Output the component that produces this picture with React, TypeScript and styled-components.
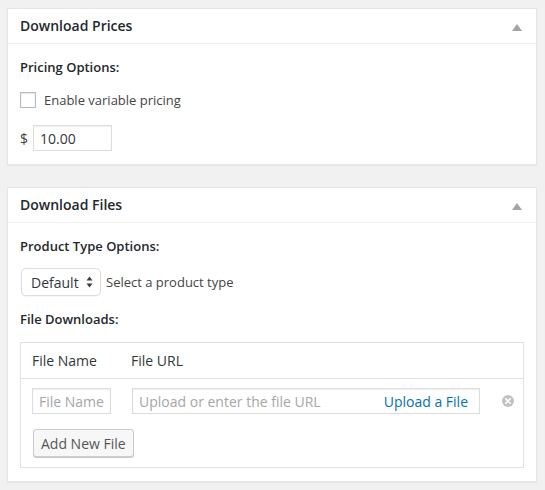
import React from "react";
import styled, { createGlobalStyle } from "styled-components";

const Global = createGlobalStyle`
  html, body { margin: 0; padding: 0; background: #f1f1f1; }
  body {
    font-family: "Open Sans", "Liberation Sans", sans-serif;
    font-size: 13px;
    color: #444;
    -webkit-font-smoothing: antialiased;
  }
  * { box-sizing: border-box; }
`;

const Page = styled.div`
  display: flex;
  flex-direction: column;
  gap: 22px;
  padding: 8px 0 10px 7px;
`;

const Panel = styled.section`
  width: 530px;
  background: #fff;
  border: 1px solid #e5e5e5;
  box-shadow: 0 1px 1px rgba(0, 0, 0, 0.04);
`;

const PanelHeader = styled.header`
  display: flex;
  align-items: center;
  justify-content: space-between;
  height: 35px;
  padding: 0 14px 0 12px;
  border-bottom: 1px solid #eee;
`;

const PanelTitle = styled.h2`
  margin: 0;
  font-size: 14px;
  font-weight: 600;
  line-height: 1.4;
  color: #23282d;
`;

const Toggle = styled.span`
  width: 0;
  height: 0;
  border-left: 5px solid transparent;
  border-right: 5px solid transparent;
  border-bottom: 7px solid #a0a5aa;
  margin-top: 2px;
`;

const PanelBody = styled.div`
  display: flex;
  flex-direction: column;
  align-items: flex-start;
  gap: 14px;
  padding: 13px 12px 13px;
`;

const SectionLabel = styled.div<{ $top?: number }>`
  font-weight: 600;
  line-height: 18px;
  color: #23282d;
  margin-top: ${(p) => p.$top ?? 0}px;
`;

const CheckRow = styled.label`
  display: flex;
  align-items: center;
  gap: 8px;
  line-height: 18px;
  margin-top: 1px;
  color: #444;
`;

const CheckBox = styled.span`
  width: 16px;
  height: 16px;
  border: 1px solid #b4b9be;
  background: #fff;
  box-shadow: inset 0 1px 2px rgba(0, 0, 0, 0.1);
`;

const PriceRow = styled.div`
  display: flex;
  align-items: center;
  gap: 5px;
  margin-top: 2px;
  color: #444;
  font-size: 14px;
`;

const TextInput = styled.div<{ $w: number; $placeholder?: boolean }>`
  display: flex;
  align-items: center;
  justify-content: space-between;
  width: ${(p) => p.$w}px;
  height: 26px;
  padding: 0 7px 0 6px;
  border: 1px solid #ddd;
  background: #fff;
  box-shadow: inset 0 1px 2px rgba(0, 0, 0, 0.07);
  font-size: 14px;
  color: ${(p) => (p.$placeholder ? "#a6a6a6" : "#32373c")};
  white-space: nowrap;
  overflow: hidden;
`;

const TypeRow = styled.div`
  display: flex;
  align-items: center;
  gap: 5px;
  margin: -1px 0 0 1px;
`;

const Select = styled.div`
  display: flex;
  align-items: center;
  justify-content: space-between;
  width: 80px;
  height: 28px;
  padding: 0 7px 0 9px;
  border: 1px solid #ddd;
  border-radius: 5px;
  background: #fff;
  box-shadow: 0 1px 1px rgba(0, 0, 0, 0.04);
  font-size: 14px;
  color: #32373c;
`;

const Hint = styled.span`
  color: #444;
`;

const FileTable = styled.div`
  width: 504px;
  border: 1px solid #e1e1e1;
`;

const TableHead = styled.div`
  display: flex;
  align-items: center;
  height: 36px;
  padding: 0 11px;
  border-bottom: 1px solid #e1e1e1;
  font-size: 14px;
  color: #32373c;
`;

const HeadCell = styled.span<{ $w?: number }>`
  width: ${(p) => (p.$w ? `${p.$w}px` : "auto")};
`;

const TableBody = styled.div`
  display: flex;
  flex-direction: column;
  align-items: flex-start;
  gap: 15px;
  padding: 9px 12px 10px 11px;
`;

const FileRow = styled.div`
  display: flex;
  align-items: center;
  gap: 21px;
`;

const UploadLink = styled.span`
  color: #0073aa;
  font-size: 14px;
  margin-right: 4px;
`;

const Remove = styled.span`
  display: flex;
  margin-left: 1px;
`;

const Button = styled.button`
  height: 28px;
  padding: 0 7px;
  margin-left: 1px;
  border: 1px solid #ccc;
  border-radius: 3px;
  background: #f7f7f7;
  box-shadow: 0 1px 0 #ccc;
  font-family: inherit;
  font-size: 14px;
  color: #555;
`;

const SelectArrows = () => (
  <svg width="7" height="12" viewBox="0 0 7 12">
    <path d="M3.5 0.5 L6.5 4.5 L0.5 4.5 Z" fill="#3c3c3c" />
    <path d="M3.5 11.5 L6.5 7.5 L0.5 7.5 Z" fill="#3c3c3c" />
  </svg>
);

const DismissIcon = () => (
  <svg width="12" height="12" viewBox="0 0 12 12">
    <circle cx="6" cy="6" r="6" fill="#c2c2c2" />
    <path d="M3.8 3.8 L8.2 8.2 M8.2 3.8 L3.8 8.2" stroke="#fff" strokeWidth="1.6" strokeLinecap="round" />
  </svg>
);

export default function App() {
  return (
    <>
      <Global />
      <Page>
        <Panel>
          <PanelHeader>
            <PanelTitle>Download Prices</PanelTitle>
            <Toggle />
          </PanelHeader>
          <PanelBody>
            <SectionLabel $top={1}>Pricing Options:</SectionLabel>
            <CheckRow>
              <CheckBox />
              Enable variable pricing
            </CheckRow>
            <PriceRow>
              <span>$</span>
              <TextInput $w={79}>10.00</TextInput>
            </PriceRow>
          </PanelBody>
        </Panel>

        <Panel>
          <PanelHeader>
            <PanelTitle>Download Files</PanelTitle>
            <Toggle />
          </PanelHeader>
          <PanelBody>
            <SectionLabel $top={1}>Product Type Options:</SectionLabel>
            <TypeRow>
              <Select>
                Default
                <SelectArrows />
              </Select>
              <Hint>Select a product type</Hint>
            </TypeRow>
            <SectionLabel>File Downloads:</SectionLabel>
            <FileTable>
              <TableHead>
                <HeadCell $w={99}>File Name</HeadCell>
                <HeadCell>File URL</HeadCell>
              </TableHead>
              <TableBody>
                <FileRow>
                  <TextInput $w={79} $placeholder>File Name</TextInput>
                  <TextInput $w={348} $placeholder>
                    Upload or enter the file URL
                    <UploadLink>Upload a File</UploadLink>
                  </TextInput>
                  <Remove>
                    <DismissIcon />
                  </Remove>
                </FileRow>
                <Button>Add New File</Button>
              </TableBody>
            </FileTable>
          </PanelBody>
        </Panel>
      </Page>
    </>
  );
}
